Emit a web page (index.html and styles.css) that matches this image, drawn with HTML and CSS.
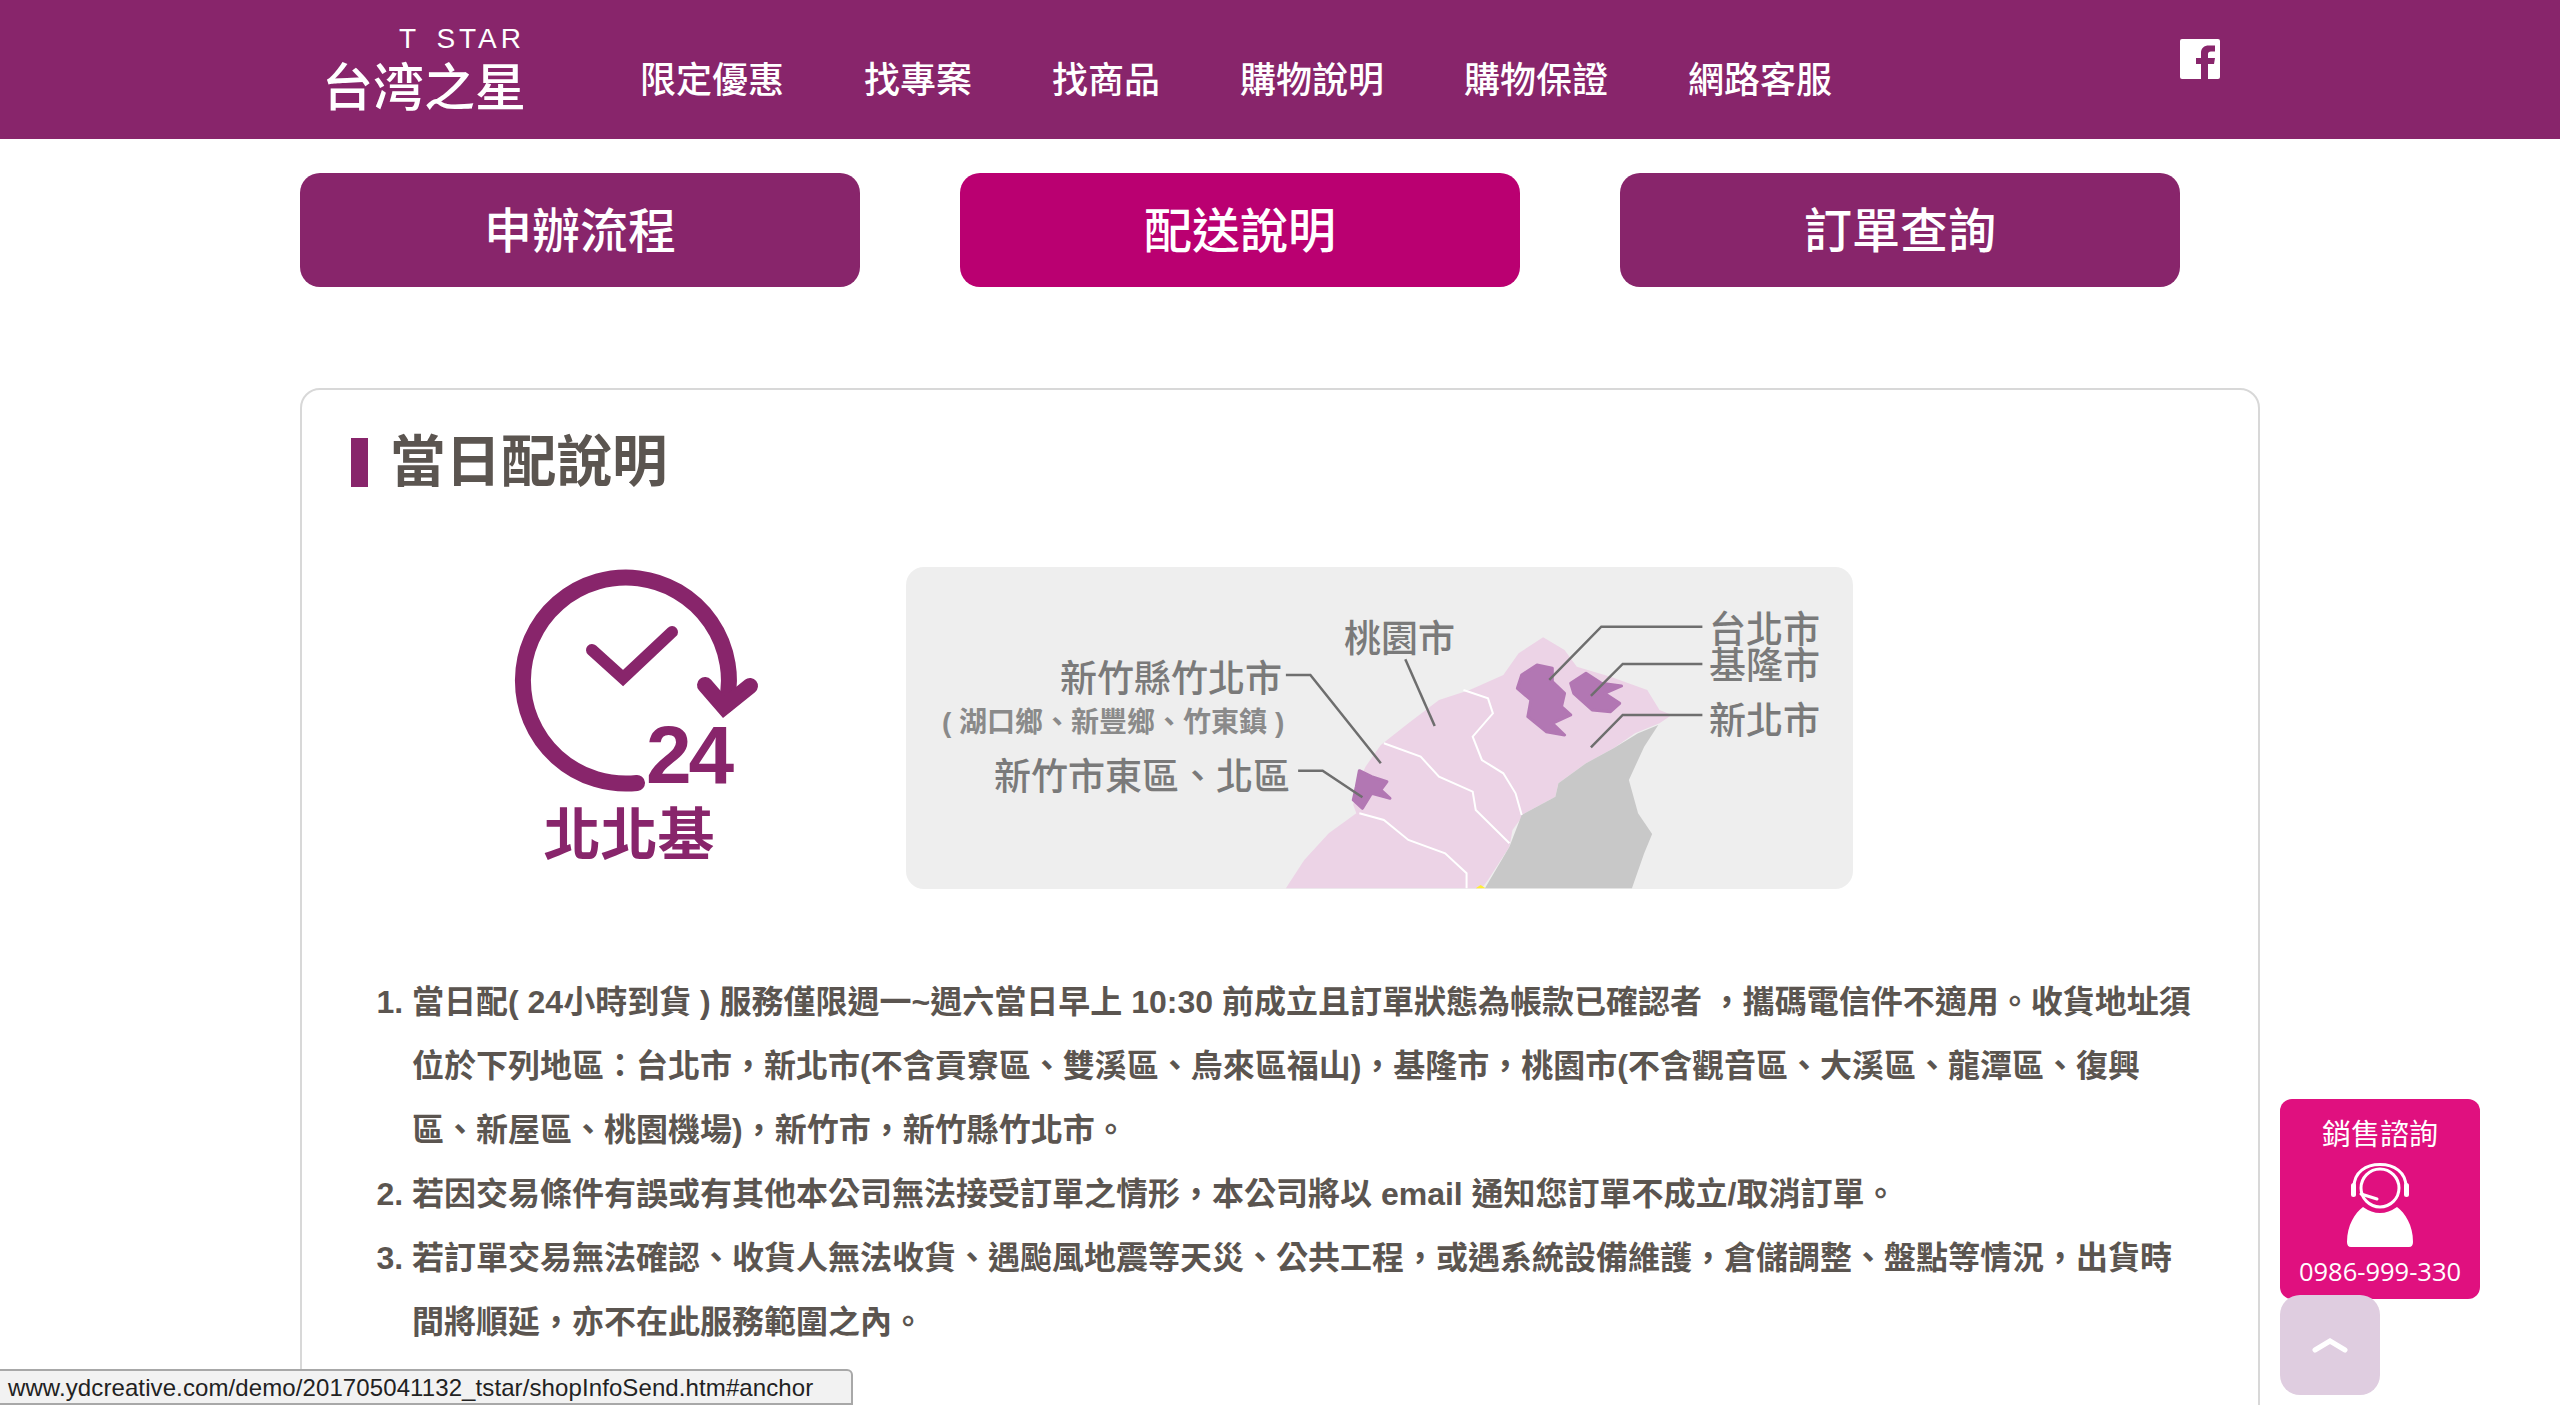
FILE: index.html
```html
<!DOCTYPE html>
<html lang="zh-Hant">
<head>
  <meta charset="UTF-8">
  <title>配送說明</title>
  <link rel="stylesheet" href="styles.css">
</head>
<body>

  <header class="site-header">
    <div class="header-inner">
      <a class="logo">
        <span class="logo-en">T STAR</span>
        <span class="logo-zh">台湾之星</span>
      </a>
      <nav class="main-nav">
        <a>限定優惠</a>
        <a>找專案</a>
        <a>找商品</a>
        <a>購物說明</a>
        <a>購物保證</a>
        <a>網路客服</a>
      </nav>
      <svg class="fb-icon" viewBox="0 0 40 40" width="40" height="40">
        <rect width="40" height="40" rx="2" fill="#fff"/>
        <path d="M21 40V25H16V19H21V14C21 9 24 6.5 29 6.5H35V12.5H31C29 12.5 28 13.5 28 15V19H35L34 25H28V40Z" fill="#88256b"/>
      </svg>
    </div>
  </header>

  <main class="page">
    <div class="tabs">
      <a class="tab">申辦流程</a>
      <a class="tab active">配送說明</a>
      <a class="tab">訂單查詢</a>
    </div>

    <section class="card">
      <h2 class="card-title">當日配說明</h2>

      <div class="intro">
        <svg class="clock" viewBox="0 0 270 310" width="270" height="310">
          <path d="M137 223A103 103 0 1 1 226 145" fill="none" stroke="#88256b" stroke-width="16" stroke-linecap="round"/>
          <path d="M205 125L224 147L250 126" fill="none" stroke="#88256b" stroke-width="16" stroke-linecap="round"/>
          <path d="M92 90L123 118L172 72" fill="none" stroke="#88256b" stroke-width="12" stroke-linecap="round"/>
          <text class="clock-num" x="146" y="223">24</text>
          <text class="clock-label" x="129" y="295">北北基</text>
        </svg>

        <svg class="map" viewBox="0 0 947 322" width="947" height="322">
          <rect width="947" height="322" fill="#eeeeee"/>
          <g class="map-art" transform="translate(-6 -7) scale(0.6125 0.3333)">
            <path d="M630 985L660 900L700 820L745 760L740 735L745 680L760 620L785 555L830 490L880 420L930 390L985 345L1010 280L1050 232L1085 270L1105 320L1160 350L1220 390L1240 450L1260 465L1240 490L1200 520L1165 565L1120 610L1075 670L1070 710L1020 760L1000 810L995 860L960 960L950 985Z" fill="#ecd3e6"/>
            <path d="M1238 495L1205 520L1165 565L1120 610L1075 670L1070 710L1015 765L995 860L955 985L1195 985L1215 880L1228 822L1205 760L1190 660L1215 560Z" fill="#c8c8c8"/>
            <g class="map-border">
              <path d="M920 390L960 415L968 460L935 530L950 600L985 640L1005 700L1015 765"/>
              <path d="M790 550L850 590L880 650L935 695L940 750L995 850"/>
              <path d="M750 760L790 780L830 840L890 880L925 940L925 985"/>
            </g>
            <g class="map-area">
              <path d="M1040 315L1065 325L1065 365L1085 400L1080 440L1095 465L1065 490L1085 525L1055 515L1025 470L1030 420L1008 385L1015 345Z"/>
              <path d="M1120 340L1145 370L1178 378L1150 400L1175 430L1160 455L1130 450L1100 400L1095 370Z"/>
              <path d="M750 632L770 650L795 665L785 690L800 715L770 700L755 745L740 720L745 680Z"/>
            </g>
            <g class="map-line">
              <path d="M1310 200H1145L1060 360"/>
              <path d="M1310 312H1180L1128 408"/>
              <path d="M1310 465H1180L1128 562"/>
              <path d="M825 298L873 498"/>
              <path d="M630 345H670L785 610"/>
              <path d="M650 632H690L755 712"/>
            </g>
            <path d="M940 985L948 975L956 985Z" fill="#ffee33"/>
          </g>
          <text class="map-text" x="438" y="85">桃園市</text>
          <text class="map-text" x="803" y="76">台北市</text>
          <text class="map-text" x="803" y="112">基隆市</text>
          <text class="map-text" x="803" y="167">新北市</text>
          <text class="map-text" x="154" y="125">新竹縣竹北市</text>
          <text class="map-text small" x="36" y="165">( 湖口鄉、新豐鄉、竹東鎮 )</text>
          <text class="map-text" x="88" y="223">新竹市東區、北區</text>
        </svg>
      </div>

      <ol class="rules">
        <li>當日配( 24小時到貨 ) 服務僅限週一~週六當日早上 10:30 前成立且訂單狀態為帳款已確認者 ，攜碼電信件不適用。收貨地址須位於下列地區：台北市，新北市(不含貢寮區、雙溪區、烏來區福山)，基隆市，桃園市(不含觀音區、大溪區、龍潭區、復興區、新屋區、桃園機場)，新竹市，新竹縣竹北市。</li>
        <li>若因交易條件有誤或有其他本公司無法接受訂單之情形，本公司將以 email 通知您訂單不成立/取消訂單。</li>
        <li>若訂單交易無法確認、收貨人無法收貨、遇颱風地震等天災、公共工程，或遇系統設備維護，倉儲調整、盤點等情況，出貨時間將順延，亦不在此服務範圍之內。</li>
      </ol>
    </section>
  </main>

  <aside class="sales-box">
    <div class="sales-title">銷售諮詢</div>
    <svg class="sales-icon" viewBox="0 0 66 84" width="66" height="84">
      <path d="M7 24C7 9 19 1.5 33 1.5S59 9 59 24" fill="none" stroke="#fff" stroke-width="3"/>
      <rect x="4" y="20" width="5" height="14" rx="2.5" fill="#fff"/>
      <rect x="57" y="20" width="5" height="14" rx="2.5" fill="#fff"/>
      <circle cx="33" cy="25" r="19" fill="none" stroke="#fff" stroke-width="3"/>
      <path d="M14 31L30 36" stroke="#fff" stroke-width="3" stroke-linecap="round"/>
      <path d="M0 79C0 62 8 50 16 44Q33 56 50 44C58 50 66 62 66 79Q66 84 62 84H4Q0 84 0 79Z" fill="#fff"/>
    </svg>
    <div class="sales-phone">0986-999-330</div>
  </aside>

  <a class="to-top">
    <svg viewBox="0 0 36 16" width="36" height="16">
      <path d="M3 13L18 4L33 13" fill="none" stroke="#fff" stroke-width="5" stroke-linecap="round"/>
    </svg>
  </a>

  <div class="status-bar">www.ydcreative.com/demo/201705041132_tstar/shopInfoSend.htm#anchor</div>

</body>
</html>
```

FILE: styles.css
```css
html, body {
  margin: 0;
  height: 1405px;
  overflow: hidden;
  background: #fff;
}
body {
  font-family: "Liberation Sans", "Noto Sans CJK TC", sans-serif;
  color: #5b5550;
}

/* header */
.site-header {
  height: 139px;
  background: #88256b;
  color: #fff;
}
.header-inner {
  width: 1960px;
  margin: 0 auto;
  display: flex;
  align-items: flex-start;
}
.logo {
  display: flex;
  flex-direction: column;
  align-items: flex-end;
  width: 203px;
  margin: 25px 0 0 23px;
}
.logo-en {
  font-size: 28px;
  line-height: 28px;
  letter-spacing: 4px;
  word-spacing: 5px;
  margin-right: 1px;
}
.logo-zh {
  font-size: 51px;
  font-weight: 500;
  line-height: 50px;
  margin-top: 11px;
  white-space: nowrap;
}
.main-nav {
  display: flex;
  gap: 80px;
  margin: 52px 0 0 114px;
  font-family: "Noto Sans CJK TC", sans-serif;
  font-size: 36px;
  font-weight: 500;
  line-height: 50px;
}
.fb-icon {
  margin: 39px 40px 0 auto;
}

/* tabs */
.page {
  width: 1960px;
  height: 1266px;
  margin: 0 auto;
  overflow: hidden;
}
.tabs {
  display: flex;
  gap: 100px;
  padding-top: 34px;
}
.tab {
  width: 560px;
  height: 114px;
  border-radius: 20px;
  background: #88256b;
  color: #fff;
  font-family: "Noto Sans CJK TC", sans-serif;
  font-size: 48px;
  font-weight: 500;
  line-height: 108px;
  text-align: center;
}
.tab.active {
  background: #ba0071;
}

/* card */
.card {
  margin-top: 101px;
  height: 1100px;
  border: 2px solid #d8d8d8;
  border-radius: 20px;
  padding: 48px 60px 0 49px;
  box-sizing: border-box;
}
.card-title {
  margin: 0;
  height: 49px;
  display: flex;
  align-items: center;
  gap: 22px;
  font-size: 55.5px;
  font-weight: 700;
  line-height: 49px;
}
.card-title::before {
  content: "";
  width: 17px;
  height: 49px;
  background: #88256b;
}
.intro {
  display: flex;
  align-items: flex-start;
  margin-top: 73px;
  padding-left: 149px;
  height: 329px;
}
.clock {
  flex: none;
}
.clock-num {
  font-size: 82px;
  font-weight: 700;
  letter-spacing: -3px;
  fill: #88256b;
}
.clock-label {
  font-size: 57px;
  font-weight: 700;
  text-anchor: middle;
  fill: #88256b;
}
.map {
  flex: none;
  margin: 7px 0 0 136px;
  border-radius: 18px;
}
.map-art {
  filter: blur(0.6px);
}
.map-border path {
  fill: none;
  stroke: #fff;
  stroke-width: 2;
  vector-effect: non-scaling-stroke;
}
.map-area path {
  fill: #b277b3;
  stroke: #b277b3;
  stroke-width: 3;
  stroke-linejoin: round;
  vector-effect: non-scaling-stroke;
}
.map-line path {
  fill: none;
  stroke: #6e6e6e;
  stroke-width: 2.5;
  vector-effect: non-scaling-stroke;
}
.map-text {
  font-size: 37px;
  font-weight: 500;
  fill: #7a7a7a;
}
.map-text.small {
  font-size: 28px;
  font-weight: 700;
  fill: #8a8a8a;
}

/* list */
.rules {
  margin: 81px 0 0;
  padding: 0 0 0 61px;
  font-size: 32px;
  font-weight: 700;
  line-height: 64px;
}

/* floating stuff */
.sales-box {
  position: fixed;
  left: 2280px;
  top: 1099px;
  width: 200px;
  height: 200px;
  border-radius: 12px;
  background: #e0107f;
  color: #fff;
  display: flex;
  flex-direction: column;
  align-items: center;
}
.sales-title {
  margin-top: 15px;
  font-family: "Noto Sans CJK TC", sans-serif;
  font-size: 29px;
  line-height: 36px;
}
.sales-icon {
  margin-top: 13px;
}
.sales-phone {
  margin-top: 9px;
  font-family: "Open Sans", sans-serif;
  font-size: 25.5px;
  line-height: 30px;
}
.to-top {
  position: fixed;
  left: 2280px;
  top: 1295px;
  width: 100px;
  height: 100px;
  border-radius: 20px;
  background: #dfcde0;
  display: flex;
  align-items: center;
  justify-content: center;
}
.status-bar {
  position: fixed;
  left: 0;
  bottom: 0;
  width: 853px;
  height: 36px;
  box-sizing: border-box;
  padding-left: 8px;
  background: #f2f2f2;
  border: 2px solid #a8a8a8;
  border-left: 0;
  border-top-right-radius: 6px;
  color: #222;
  font-size: 24px;
  letter-spacing: 0.1px;
  line-height: 34px;
  white-space: nowrap;
}
```
